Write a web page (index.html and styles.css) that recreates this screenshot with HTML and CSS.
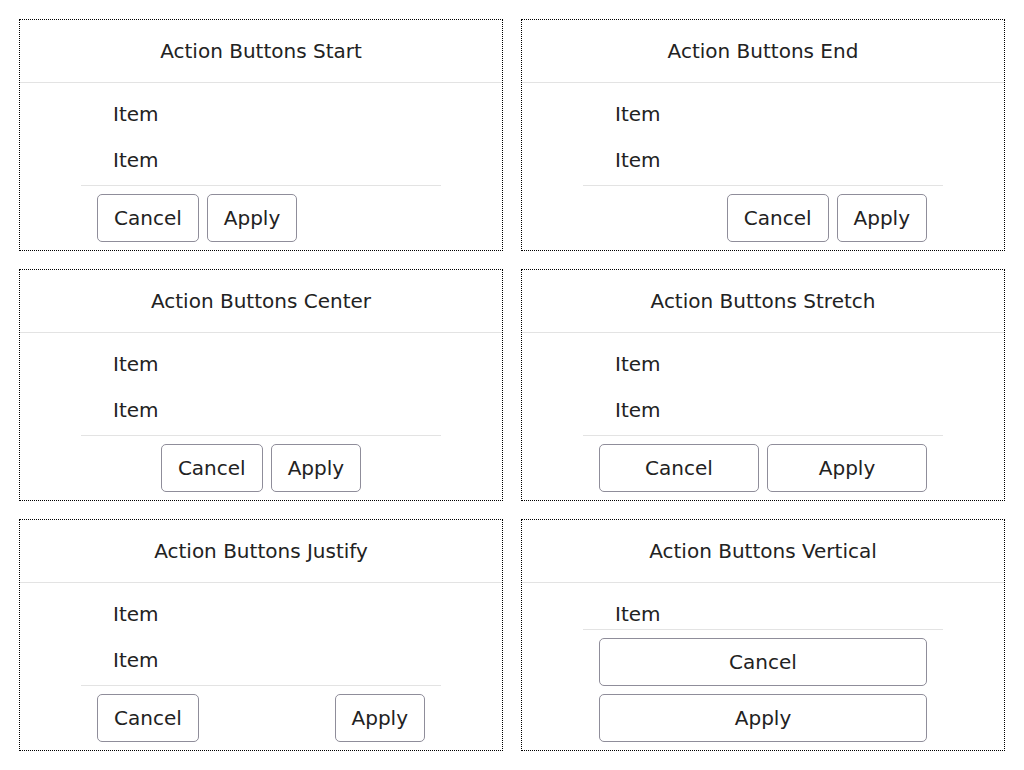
FILE: index.html
```html
<!DOCTYPE html>
<html>
<head>
<meta charset="utf-8">
<link rel="stylesheet" href="styles.css">
</head>
<body>
<div class="grid">
  <section class="card">
    <header class="card-title">Action Buttons Start</header>
    <div class="panel">
      <ul class="list"><li>Item</li><li>Item</li></ul>
      <div class="actions start"><button>Cancel</button><button>Apply</button></div>
    </div>
  </section>
  <section class="card">
    <header class="card-title">Action Buttons End</header>
    <div class="panel">
      <ul class="list"><li>Item</li><li>Item</li></ul>
      <div class="actions end"><button>Cancel</button><button>Apply</button></div>
    </div>
  </section>
  <section class="card">
    <header class="card-title">Action Buttons Center</header>
    <div class="panel">
      <ul class="list"><li>Item</li><li>Item</li></ul>
      <div class="actions center"><button>Cancel</button><button>Apply</button></div>
    </div>
  </section>
  <section class="card">
    <header class="card-title">Action Buttons Stretch</header>
    <div class="panel">
      <ul class="list"><li>Item</li><li>Item</li></ul>
      <div class="actions stretch"><button>Cancel</button><button>Apply</button></div>
    </div>
  </section>
  <section class="card">
    <header class="card-title">Action Buttons Justify</header>
    <div class="panel">
      <ul class="list"><li>Item</li><li>Item</li></ul>
      <div class="actions justify"><button>Cancel</button><button>Apply</button></div>
    </div>
  </section>
  <section class="card">
    <header class="card-title">Action Buttons Vertical</header>
    <div class="panel">
      <ul class="list"><li>Item</li><li>Item</li></ul>
      <div class="actions vertical"><button>Cancel</button><button>Apply</button></div>
    </div>
  </section>
</div>
</body>
</html>
```

FILE: styles.css
```css
* { box-sizing: border-box; }
html, body { margin: 0; padding: 0; background: #fff; }
body {
  font-family: "DejaVu Sans", sans-serif;
  font-size: 20px;
  color: #222;
}
.grid {
  display: grid;
  grid-template-columns: 484px 484px;
  grid-auto-rows: 232px;
  gap: 18px;
  padding: 19px;
}
.card {
  border: 1px dotted #000;
  display: flex;
  flex-direction: column;
  overflow: hidden;
}
.card-title {
  height: 63px;
  flex: none;
  display: flex;
  align-items: center;
  justify-content: center;
  border-bottom: 1px solid #e3e3e3;
  line-height: 22px;
}
.panel {
  flex: 1;
  min-height: 0;
  width: 360px;
  margin: 0 auto;
  display: flex;
  flex-direction: column;
}
.list {
  list-style: none;
  margin: 0;
  padding: 8px 0 0;
  flex: 1;
  min-height: 0;
  overflow: hidden;
}
.list li {
  height: 46px;
  line-height: 46px;
  padding-left: 32px;
}
.actions {
  flex: none;
  border-top: 1px solid #e3e3e3;
  padding: 8px 16px;
  display: flex;
  gap: 8px;
}
.actions button {
  font-family: inherit;
  font-size: 20px;
  color: #222;
  background: #fff;
  border: 1px solid #8f8d9a;
  border-radius: 5px;
  height: 48px;
  padding: 0 16px;
  line-height: 22px;
}
.actions.start { justify-content: flex-start; }
.actions.end { justify-content: flex-end; }
.actions.center { justify-content: center; }
.actions.justify { justify-content: space-between; }
.actions.stretch button { flex: 1; }
.actions.vertical { flex-direction: column; }
```
